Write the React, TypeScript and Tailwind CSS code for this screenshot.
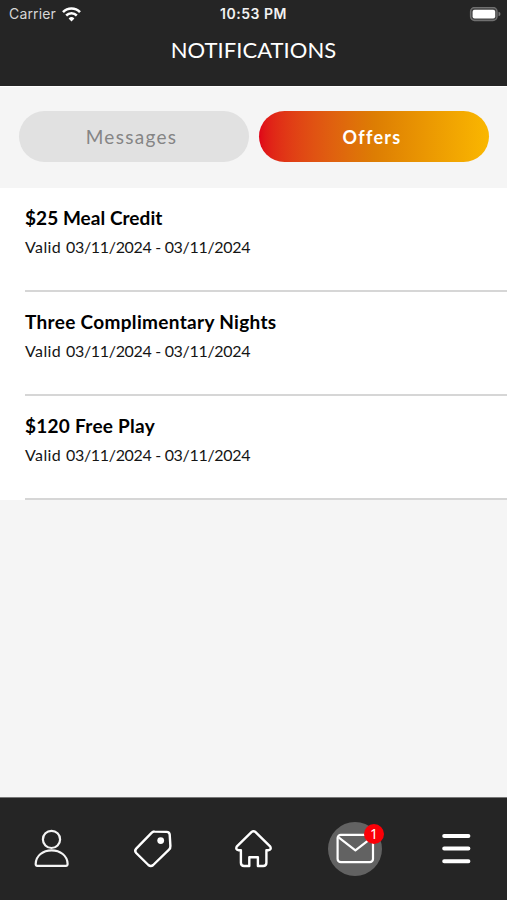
const offers = [
  { title: '$25 Meal Credit', titleClass: 'tracking-[0.05px]' },
  { title: 'Three Complimentary Nights', titleClass: 'tracking-[0.32px]' },
  { title: '$120 Free Play', titleClass: 'tracking-[0.27px]' },
];

function StatusBar() {
  return (
    <div className="grid h-7 grid-cols-[1fr_auto_1fr] items-center pr-[6px] pl-[9px] font-['Inter',sans-serif] text-[14px] leading-7">
      <div className="flex items-center gap-[6px] text-[#d6d6d6]">
        <span className="tracking-[0.15px]">Carrier</span>
        <svg width="19" height="15" viewBox="0 0 19 15" fill="none" stroke="#fff">
          <path d="M1 5.1a12 12 0 0 1 17 0" strokeWidth="2.6" />
          <path d="M4.2 8.5a7.5 7.5 0 0 1 10.6 0" strokeWidth="2.5" />
          <path d="M9.5 14.5 6.6 11.5a4.1 4.1 0 0 1 5.8 0Z" fill="#fff" stroke="none" />
        </svg>
      </div>
      <div className="pr-[3px] text-center font-semibold tracking-[0.5px] whitespace-nowrap text-[#f2f2f2]">10:53 PM</div>
      <div className="flex justify-end">
        <svg width="32" height="15" viewBox="0 0 32 15">
          <rect x="1.6" y="0.5" width="26.4" height="13" rx="4" fill="#444" stroke="#707070" strokeWidth="1.4" />
          <rect x="3.6" y="2.7" width="22.6" height="8.8" rx="2" fill="#fff" />
          <path d="M29.5 4.7q2 .6 2 2.3t-2 2.3Z" fill="#777" />
        </svg>
      </div>
    </div>
  );
}

function NavBar() {
  return (
    <nav className="grid h-[103px] shrink-0 grid-cols-5 items-center border-t border-[#777] bg-[#252525]">
      <button aria-label="Profile" className="flex justify-center">
        <svg width="40" height="44" viewBox="31 827 40 44" fill="none" stroke="#f4f4f4" strokeWidth="2.2">
          <circle cx="51.5" cy="839.4" r="8.6" />
          <path d="M37.3 865.8q-1.8 0-1.6-2C36 855.5 43 850.4 51.6 850.4S67.3 855.5 67.6 863.8q.1 2-1.7 2Z" />
        </svg>
      </button>
      <button aria-label="Offers" className="flex justify-center">
        <svg width="44" height="44" viewBox="130 827 44 44" fill="none" stroke="#fff" strokeWidth="2.4" strokeLinejoin="round">
          <path d="M154.4 831.5 166.6 831.9Q169.5 832 169.7 834.7L170.4 846Q170.5 848.3 169 849.7L153.2 865Q150.8 867.2 148.4 865L136.2 853Q134.2 850.8 136.2 848.6L151.8 832.6Q152.9 831.4 154.4 831.5Z" />
          <circle cx="160.7" cy="840.6" r="3.4" fill="#fff" stroke="none" />
        </svg>
      </button>
      <button aria-label="Home" className="flex justify-center">
        <svg width="44" height="44" viewBox="231.5 827 44 44" fill="none" stroke="#fff" strokeWidth="2.4" strokeLinejoin="round">
          <path d="M252.2 831.9Q254 830.4 255.8 831.9L270.6 846.3Q272.4 849.8 268.8 850.2H266.9V862.8Q266.9 866 263.7 866H258.4V857.2H249.8V866H244.6Q241.4 866 241.4 862.8V850.2H239.2Q235.6 849.8 237.4 846.3Z" />
        </svg>
      </button>
      <button aria-label="Notifications" className="flex justify-center">
        <span className="relative flex size-[54px] items-center justify-center rounded-full bg-[#626262]">
          <svg width="40" height="32" viewBox="335 833 40 32" fill="none" stroke="#fff" strokeWidth="2.2" strokeLinejoin="round">
            <rect x="337.6" y="834.8" width="35.4" height="27.4" rx="3.2" />
            <path d="M338.6 837.4 355.4 850.4 372.2 837.4" />
          </svg>
          <span className="absolute top-[2px] -right-[2px] flex size-5 items-center justify-center rounded-full bg-[#fb0007] font-['Noto_Sans',sans-serif] text-[14px] leading-5 text-white">
            1
          </span>
        </span>
      </button>
      <button aria-label="Menu" className="flex justify-center">
        <svg width="44" height="44" viewBox="434 827 44 44" stroke="#fff" strokeWidth="4" strokeLinecap="round">
          <path d="M444.2 836H468.4M444.2 848.5H468.4M444.2 861.3H468.4" />
        </svg>
      </button>
    </nav>
  );
}

export default function App() {
  return (
    <div className="flex h-[900px] w-[507px] flex-col overflow-hidden bg-[#f5f5f5] font-['Lato',sans-serif]">
      <header className="h-[86px] shrink-0 bg-[#252525]">
        <StatusBar />
        <h1 className="mt-[6px] text-center text-[22px] leading-8 tracking-[0.05px] text-white">NOTIFICATIONS</h1>
      </header>
      <div className="flex h-[102px] shrink-0 gap-[10px] border-t border-white pt-[24px] pl-[19px]">
        <button className="h-[51px] w-[230px] shrink-0 rounded-full bg-[#e1e1e1] pt-[2px] pr-[5px] text-[19px] tracking-[1.3px] text-[#858585]">
          Messages
        </button>
        <button className="h-[51px] w-[230px] shrink-0 rounded-full bg-linear-to-r from-[#e00218] via-[#dd7d03] to-[#fab700] pt-[2px] pr-[4px] text-[18px] font-bold tracking-[1.3px] text-white">
          Offers
        </button>
      </div>
      <ul className="shrink-0 bg-white pl-[25px]">
        {offers.map((offer) => (
          <li key={offer.title} className="h-[104px] border-b-2 border-[#d6d6d6] pt-[17px] text-black">
            <h2 className={`text-[19px] leading-[26px] font-bold ${offer.titleClass}`}>{offer.title}</h2>
            <p className="mt-[4px] text-[16px] leading-6 tracking-[-0.32px] text-[#151515]">
              <span className="mr-[1px] tracking-[0.4px]">Valid</span> 03/11/2024
              <span> - </span>03/11/2024
            </p>
          </li>
        ))}
      </ul>
      <div className="flex-1" />
      <NavBar />
    </div>
  );
}
